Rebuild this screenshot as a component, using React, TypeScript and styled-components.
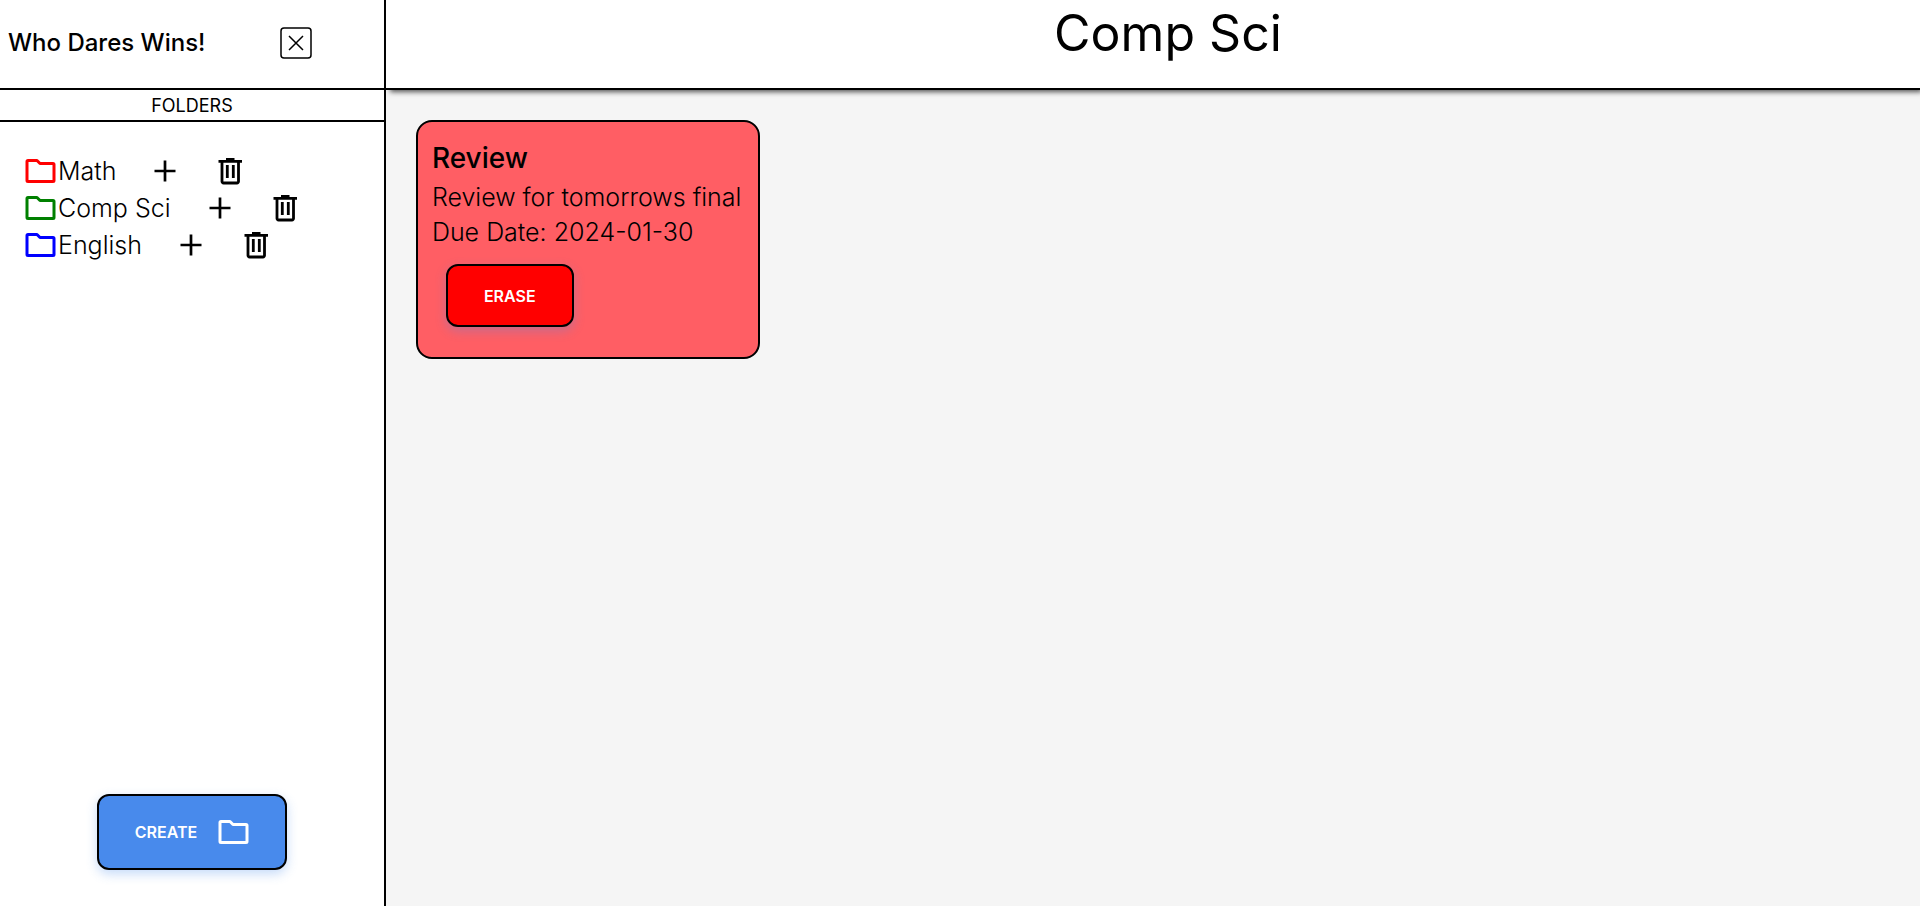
import React from 'react';
import styled, { createGlobalStyle } from 'styled-components';

const Global = createGlobalStyle`
  *, *::before, *::after { box-sizing: border-box; }
  body { margin: 0; background: #f5f5f5; color: #000; font-family: Inter, "Open Sans", sans-serif; }
  h1, h2, h3, p, ul { margin: 0; padding: 0; font-weight: 400; }
  button { font-family: inherit; cursor: pointer; }
`;

const Page = styled.div`
  display: grid;
  grid-template-columns: minmax(240px, 20.1%) 1fr;
  min-height: 100vh;
`;

const Sidebar = styled.aside`
  display: flex;
  flex-direction: column;
  background: #fff;
  border-right: 2px solid #000;
`;

const Brand = styled.header`
  display: flex;
  align-items: center;
  justify-content: space-between;
  height: 90px;
  padding: 0 72px 2px 8px;
  border-bottom: 2px solid #000;
`;

const BrandName = styled.h2`
  font-size: 24px;
  font-weight: 500;
  line-height: 36px;
`;

const IconButton = styled.button`
  display: flex;
  padding: 0;
  border: 0;
  background: none;
  color: #000;
`;

const SectionTitle = styled.h3`
  height: 32px;
  border-bottom: 2px solid #000;
  font-size: 18px;
  line-height: 32px;
  text-align: center;
`;

const FolderList = styled.ul`
  flex: 1;
  padding: 30px 24px;
  list-style: none;
`;

const FolderRow = styled.li`
  display: flex;
  align-items: center;
  height: 37px;
  gap: 33px;
`;

const FolderLink = styled.a<{ $color: string }>`
  display: flex;
  align-items: center;
  gap: 2px;
  color: #000;
  font-size: 25px;
  font-weight: 300;
  text-decoration: none;
  svg { color: ${(p) => p.$color}; }
`;

const ActionButton = styled.button<{ $color: string; $shadow: string; $tall?: boolean }>`
  display: flex;
  align-items: center;
  gap: 20px;
  height: ${(p) => (p.$tall ? 76 : 63)}px;
  padding: 0 36px;
  border: 2px solid #000;
  border-radius: 12px;
  background: ${(p) => p.$color};
  box-shadow: 0 4px 11px ${(p) => p.$shadow};
  color: #fff;
  font-size: 16px;
  font-weight: 600;
`;

const SidebarFooter = styled.footer`
  display: flex;
  justify-content: center;
  padding-bottom: 36px;
`;

const Content = styled.main`
  background: #f5f5f5;
`;

const TitleBar = styled.header`
  height: 90px;
  padding-left: 30px;
  border-bottom: 2px solid #000;
  background: #fff;
  box-shadow: 3px 3px 5px -1px #555;
  text-align: center;
`;

const Title = styled.h1`
  font-size: 50px;
  line-height: 66px;
`;

const Cards = styled.section`
  display: flex;
  flex-wrap: wrap;
  align-items: flex-start;
  padding: 30px;
`;

const Card = styled.article`
  display: flex;
  flex-direction: column;
  align-items: flex-start;
  min-width: 344px;
  padding: 18px 14px 30px;
  border: 2px solid #000;
  border-radius: 16px;
  background: #ff5e64;
`;

const CardTitle = styled.h2`
  margin-bottom: 4px;
  font-size: 28px;
  font-weight: 500;
  line-height: 36px;
`;

const CardText = styled.p`
  font-size: 25px;
  font-weight: 300;
  line-height: 35px;
`;

const CardActions = styled.div`
  padding: 14px 14px 0;
`;

const FolderIcon = () => (
  <svg width="32" height="32" viewBox="0 0 32 32" fill="none" stroke="currentColor" strokeWidth="3" strokeLinejoin="round" aria-hidden="true">
    <path d="M3 6.500V25.500a1 1 0 0 0 1 1h25a1 1 0 0 0 1-1V9.500a1 1 0 0 0-1-1H16l-3-3H4a1 1 0 0 0-1 1z" />
  </svg>
);

const PlusIcon = () => (
  <svg width="32" height="32" viewBox="0 0 32 32" fill="none" stroke="currentColor" strokeWidth="2.700" aria-hidden="true">
    <path d="M16 5.500v21M5.500 16h21" />
  </svg>
);

const TrashIcon = () => (
  <svg width="32" height="32" viewBox="0 0 32 32" fill="none" stroke="currentColor" strokeWidth="2.800" aria-hidden="true">
    <path d="M4.500 6.300h23.500M12 4.300h8.500M8 6.300V26.500a1.500 1.500 0 0 0 1.500 1.500h13.500a1.500 1.500 0 0 0 1.500-1.500V6.300M13.300 10v13M19.300 10v13" />
  </svg>
);

const CloseIcon = () => (
  <svg width="32" height="32" viewBox="0 0 32 32" fill="none" stroke="currentColor" strokeWidth="1.500" aria-hidden="true">
    <rect x="1" y="1" width="30" height="30" rx="3" />
    <path d="M9 9l14 14M23 9L9 23" />
  </svg>
);

const folders = [
  { name: 'Math', color: 'red' },
  { name: 'Comp Sci', color: 'green' },
  { name: 'English', color: 'blue' },
];

export default function App() {
  return (
    <>
      <Global />
      <Page>
        <Sidebar>
          <Brand>
            <BrandName>Who Dares Wins!</BrandName>
            <IconButton aria-label="Close sidebar"><CloseIcon /></IconButton>
          </Brand>
          <SectionTitle>FOLDERS</SectionTitle>
          <FolderList>
            {folders.map((f) => (
              <FolderRow key={f.name}>
                <FolderLink href="#" $color={f.color}><FolderIcon />{f.name}</FolderLink>
                <IconButton aria-label={`Add to ${f.name}`}><PlusIcon /></IconButton>
                <IconButton aria-label={`Delete ${f.name}`}><TrashIcon /></IconButton>
              </FolderRow>
            ))}
          </FolderList>
          <SidebarFooter>
            <ActionButton $color="#488aec" $shadow="#488aec4f" $tall>CREATE<FolderIcon /></ActionButton>
          </SidebarFooter>
        </Sidebar>
        <Content>
          <TitleBar><Title>Comp Sci</Title></TitleBar>
          <Cards>
            <Card>
              <CardTitle>Review</CardTitle>
              <CardText>Review for tomorrows final</CardText>
              <CardText>Due Date: 2024-01-30</CardText>
              <CardActions>
                <ActionButton $color="red" $shadow="#488aec4f">ERASE</ActionButton>
              </CardActions>
            </Card>
          </Cards>
        </Content>
      </Page>
    </>
  );
}
